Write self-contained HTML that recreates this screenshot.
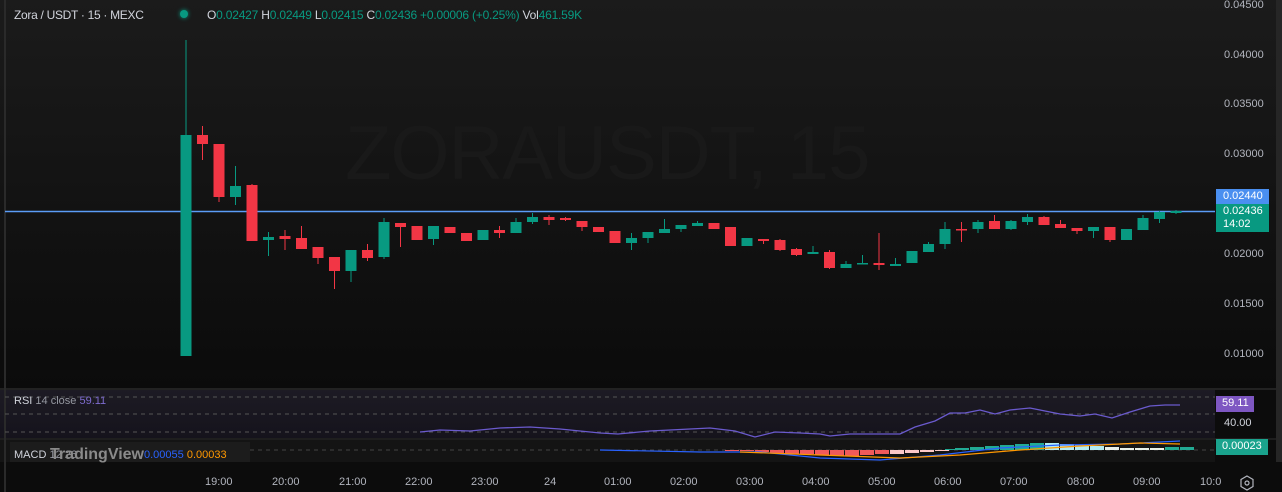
<!DOCTYPE html>
<html><head><meta charset="utf-8"><style>
html,body{margin:0;padding:0;}
body{width:1282px;height:492px;overflow:hidden;background:#0c0c0c;font-family:"Liberation Sans",sans-serif;position:relative;}
.t{position:absolute;white-space:nowrap;}
</style></head><body>
<div style="position:absolute;left:0;top:0;width:1282px;height:388px;background:linear-gradient(#1b1b1b,#0b0b0b);"></div>
<div style="position:absolute;left:0;top:388px;width:1282px;height:2px;background:#222;"></div>
<div style="position:absolute;left:0;top:390px;width:1215px;height:48px;background:linear-gradient(#1d1b24,#15131c);"></div>
<div style="position:absolute;left:0;top:438px;width:1282px;height:2px;background:#1e1e1e;"></div>
<div style="position:absolute;left:0;top:440px;width:1215px;height:22px;background:#141414;"></div>
<div style="position:absolute;left:1276px;top:0;width:6px;height:462px;background:#262626;"></div>
<div style="position:absolute;left:4px;top:0;width:2px;height:492px;background:#2a2a2a;"></div>
<div class="t" style="left:345px;top:110px;font-size:76px;color:#191919;letter-spacing:-1px;">ZORAUSDT, 15</div>
<svg id="s" width="1282" height="492" style="position:absolute;left:0;top:0;"></svg>
<div class="t" style="left:14px;top:8px;font-size:12px;color:#d1d4dc;letter-spacing:-0.3px;">Zora / USDT · 15 · MEXC</div>
<div style="position:absolute;left:180px;top:10px;width:8px;height:8px;border-radius:50%;background:#089981;box-shadow:0 0 4px #089981;"></div>
<div class="t" style="left:207px;top:8px;font-size:12px;color:#089981;letter-spacing:-0.2px;"><span style="color:#d1d4dc">O</span>0.02427 <span style="color:#d1d4dc">H</span>0.02449 <span style="color:#d1d4dc">L</span>0.02415 <span style="color:#d1d4dc">C</span>0.02436 +0.00006 (+0.25%) <span style="color:#d1d4dc">Vol</span>461.59K</div>
<div id="ax"></div>
<div style="position:absolute;left:1216px;top:189px;width:53px;height:15px;background:#4a8ff0;"></div>
<div class="t" style="left:1223px;top:190px;font-size:11px;color:#fff;">0.02440</div>
<div style="position:absolute;left:1216px;top:204px;width:53px;height:28px;background:#089981;"></div>
<div class="t" style="left:1223px;top:205px;font-size:11px;color:#fff;">0.02436</div>
<div class="t" style="left:1223px;top:218px;font-size:11px;color:#fff;">14:02</div>
<div style="position:absolute;left:1216px;top:396px;width:38px;height:16px;background:#7e57c2;"></div>
<div class="t" style="left:1222px;top:397px;font-size:11px;color:#fff;">59.11</div>
<div class="t" style="left:1224px;top:417px;font-size:11px;color:#d1d4dc;">40.00</div>
<div style="position:absolute;left:1216px;top:439px;width:52px;height:16px;background:#1aa38d;"></div>
<div class="t" style="left:1222px;top:440px;font-size:11px;color:#fff;">0.00023</div>
<div class="t" style="left:14px;top:395px;font-size:11px;color:#d1d4dc;">RSI <span style="color:#9598a1">14 close</span> <span style="color:#7e6cd0">59.11</span></div>
<div style="position:absolute;left:10px;top:442px;width:240px;height:20px;background:#1c1c1c;"></div>
<div class="t" style="left:14px;top:445px;font-size:11px;color:#d1d4dc;">MACD <span style="color:#9598a1">12 26</span> <span style="color:#8a8a8a;font-size:16px;font-weight:bold;position:relative;top:1px;margin-left:-30px;">TradingView</span><span style="color:#2962ff">0.00055</span> <span style="color:#ff9800">0.00033</span></div>
<div id="tx"></div>
<script>
var s=document.getElementById('s'),h='';
function R(x,y,w,hh,c){h+='<rect x="'+x+'" y="'+y+'" width="'+w+'" height="'+hh+'" fill="'+c+'"/>';}
h+='<line x1="5" y1="211.5" x2="1215" y2="211.5" stroke="#5b9cf6" stroke-width="1.5"/>';
var d=[['g',135,356,40,356],['r',135,144,126,160],['r',144,197,144,202],['g',186,197,166,205],['r',185,241,184,241],['g',237,240,232,256],['r',236,239,230,250],['r',238,249,226,249],['r',247,258,247,264],['r',257,271,257,289],['g',250,271,250,282],['r',250,258,244,261],['g',222,257,218,259],['r',223,227,223,247],['r',226,240,226,240],['g',226,239,226,245],['r',227,233,227,233],['r',233,241,233,241],['g',230,240,230,240],['r',230,233,226,238],['g',222,233,218,233],['g',217,222,213,224],['r',217,220,215,225],['r',218,220,217,221],
['r',221,227,221,231],['r',227,232,227,232],['r',231,243,231,243],['g',238,243,233,250],['g',232,238,232,243],['g',229,233,219,233],['g',225,229,225,232],['g',223,226,221,226],['r',223,229,223,229],['r',227,246,227,246],['g',238,246,238,246],['r',239,241,239,244],['r',240,250,239,251],['r',249,255,248,256],['g',252,254,246,254],['r',252,268,250,269],['g',264,268,261,268],['g',263,264,255,264],['r',263,265,233,270],['g',264,266,258,266],['g',251,263,251,263],['g',244,252,242,252],['g',229,244,222,249],['r',229,230,222,242],['g',222,229,220,233],['r',221,229,215,229],['g',221,229,220,230],['g',217,222,214,225],['r',217,225,216,225],['r',224,228,220,228],['r',228,231,228,234],['g',227,231,227,238],['r',227,240,227,242],['g',229,240,229,240],['g',218,230,215,230],['g',212,219,211,223],['g',211,213,210,214]];
d.forEach(function(c,i){var x=186+16.5*i,col=c[0]=='g'?'#089981':'#f23645';
R(x-0.5,c[3],1,c[4]-c[3],col);R(x-5.5,c[1],11,Math.max(1.5,c[2]-c[1]),col);});
[397,414,432].forEach(function(y){h+='<line x1="5" y1="'+y+'" x2="1215" y2="'+y+'" stroke="#555" stroke-dasharray="4 4"/>';});
h+='<line x1="250" y1="450" x2="1215" y2="450" stroke="#444" stroke-dasharray="4 4"/>';
h+='<polyline fill="none" stroke="#6a5acd" stroke-width="1.3" points="420,432 440,430 470,431 500,428 530,427 560,429 600,433 618,434 650,431 690,429 710,428 735,431 755,437 775,432 800,433 820,434 830,436 850,434 900,434 915,427 935,421 950,413 965,413 980,410 995,414 1010,410 1030,408 1045,411 1060,414 1080,416 1095,414 1112,418 1130,412 1150,406 1165,405 1180,405"/>';
var hb=[[725,-1],[740,-1],[755,-2],[770,-3],[785,-4],[800,-4],[815,-5],[830,-6],[845,-6],[860,-5],[875,-4],[890,-4],[905,-3],[920,-2],[935,-1],[945,1],[955,2],[970,3],[985,4],[1000,5],[1015,6],[1030,7],[1045,7],[1060,6],[1075,5],[1090,4],[1105,3],[1120,2],[1135,2],[1150,2],[1165,3],[1180,3]];
hb.forEach(function(b){var x=b[0],v=b[1],c;if(v<0)c=(x<880)?'#f05a5a':'#fcc8c8';else c=(x>1040&&x<1100)?'#b2ebf2':(x>=1100&&x<1160?'#e8f0ea':'#22ab94');
if(v<0)R(x,450,14,-v,c);else R(x,450-v,14,v,c);});
h+='<polyline fill="none" stroke="#2962ff" stroke-width="1.2" points="600,450 700,452 760,452 820,458 880,460 940,455 1000,448 1060,445 1120,444 1180,441"/>';
h+='<polyline fill="none" stroke="#ff9800" stroke-width="1.2" points="740,452 820,455 900,458 960,455 1020,450 1080,446 1140,443 1180,444"/>';
s.innerHTML=h;
var ax='',p=[['0.04500',-1],['0.04000',49],['0.03500',98],['0.03000',148],['0.02000',248],['0.01500',298],['0.01000',348]];
p.forEach(function(a){ax+='<div class="t" style="left:1224px;top:'+a[1]+'px;font-size:11px;color:#b2b5be;">'+a[0]+'</div>';});
document.getElementById('ax').innerHTML=ax;
var tx='',t=[['19:00',205],['20:00',272],['21:00',339],['22:00',405],['23:00',471],['24',544],['01:00',604],['02:00',670],['03:00',736],['04:00',802],['05:00',868],['06:00',934],['07:00',1000],['08:00',1067],['09:00',1133],['10:0',1200]];
t.forEach(function(a){tx+='<div class="t" style="left:'+a[1]+'px;top:476px;font-size:11px;color:#b2b5be;">'+a[0]+'</div>';});
tx+='<svg class="t" style="left:1239px;top:475px" width="16" height="16"><polygon points="8,1 14,4.5 14,11.5 8,15 2,11.5 2,4.5" fill="none" stroke="#b2b5be" stroke-width="1.2"/><circle cx="8" cy="8" r="2" fill="none" stroke="#b2b5be" stroke-width="1.2"/></svg>';
document.getElementById('tx').innerHTML=tx;
</script>
</body></html>
